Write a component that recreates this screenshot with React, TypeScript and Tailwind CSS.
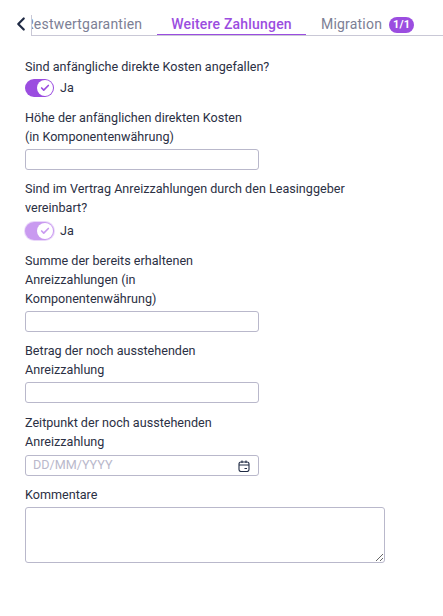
import { Check, ChevronLeft } from 'lucide-react';

function Toggle({ faded, className }: { faded?: boolean; className?: string }) {
  return (
    <div className={`flex h-[18px] items-center ${className ?? ''}`}>
      <div
        className={`flex h-[18px] w-[29px] items-center justify-end rounded-full pr-[1px] ${
          faded ? 'bg-[#c99af0] ring-1 ring-[#c99af0]/40' : 'bg-[#9b4de0]'
        }`}
      >
        <div className="flex h-[16px] w-[16px] items-center justify-center rounded-full bg-white">
          <Check className={`h-[10px] w-[10px] ${faded ? 'text-[#c99af0]' : 'text-[#9b4de0]'}`} strokeWidth={4} />
        </div>
      </div>
      <span className="ml-[6px] text-[12.6px] leading-[18px] text-[#2b3044]">Ja</span>
    </div>
  );
}

function Label({ children }: { children: React.ReactNode }) {
  return <div className="text-[12.6px] leading-[19px] text-[#2b3044]">{children}</div>;
}

function TextBox() {
  return <input className="mt-[3px] block h-[21px] w-[234px] rounded-[3px] border border-[#b9b8cb] bg-white" />;
}

export default function App() {
  return (
    <div className="h-[616px] w-[443px] overflow-hidden bg-white font-['Roboto',sans-serif]">
      <div className="flex h-[36px] items-end pt-[13px]">
        <div className="flex h-[21px] w-[32px] items-start border-r border-[#c9c8d6] pl-[10px]">
          <ChevronLeft className="-mt-[2px] h-[22px] w-[22px] shrink-0 text-[#1f2a44]" strokeWidth={2.4} />
        </div>
        <div className="flex h-[23px] flex-1 items-start overflow-hidden border-b border-[#c9c8d6] pt-[1px] text-[14px] leading-[21px] tracking-[0.2px]">
          <div className="w-[125px] shrink-0 overflow-hidden whitespace-nowrap text-[#7c8095]">
            <span className="-ml-[7px] block">Restwertgarantien</span>
          </div>
          <div className="-mt-[1px] h-[23px] w-[149px] shrink-0 border-b-2 border-[#9b4de0] pt-[1px] text-center font-medium text-[#9b4de0]">
            Weitere Zahlungen
          </div>
          <div className="ml-[15px] flex shrink-0 items-center text-[#7c8095]">
            Migration
            <span className="ml-[7px] flex h-[16px] items-center rounded-full bg-[#9b4de0] px-[4px] text-[11px] font-bold text-white">
              1/1
            </span>
          </div>
        </div>
      </div>

      <div className="pl-[25px] pt-[21px]">
        <Label>Sind anfängliche direkte Kosten angefallen?</Label>
        <Toggle className="mt-[3px]" />

        <div className="mt-[11px]">
          <Label>
            Höhe der anfänglichen direkten Kosten
            <br />
            (in Komponentenwährung)
          </Label>
          <TextBox />
        </div>

        <div className="mt-[9px] w-[330px]">
          <Label>Sind im Vertrag Anreizzahlungen durch den Leasinggeber vereinbart?</Label>
        </div>
        <Toggle faded className="mt-[5px]" />

        <div className="mt-[11px]">
          <Label>
            Summe der bereits erhaltenen
            <br />
            Anreizzahlungen (in
            <br />
            Komponentenwährung)
          </Label>
          <TextBox />
        </div>

        <div className="mt-[9px]">
          <Label>
            Betrag der noch ausstehenden
            <br />
            Anreizzahlung
          </Label>
          <TextBox />
        </div>

        <div className="mt-[10px]">
          <Label>
            Zeitpunkt der noch ausstehenden
            <br />
            Anreizzahlung
          </Label>
          <div className="mt-[4px] flex h-[21px] w-[234px] items-center justify-between rounded-[3px] border border-[#b9b8cb] bg-white pl-[7px] pr-[8px]">
            <span className="text-[12.6px] text-[#b9b8cb]">DD/MM/YYYY</span>
            <svg viewBox="0 0 12 12" className="h-[12px] w-[12px]" fill="none" stroke="#1f2a44" strokeWidth="1.1">
              <rect x="1" y="2" width="10" height="9.5" rx="2" />
              <path d="M1 5h10M4 .5v2.5M8 .5v2.5M6.5 8.5h2.5" />
            </svg>
          </div>
        </div>

        <div className="mt-[9px]">
          <Label>Kommentare</Label>
          <textarea className="mt-[3px] block h-[56px] w-[360px] rounded-[3px] border border-[#b9b8cb] bg-white" />
        </div>
      </div>
    </div>
  );
}
